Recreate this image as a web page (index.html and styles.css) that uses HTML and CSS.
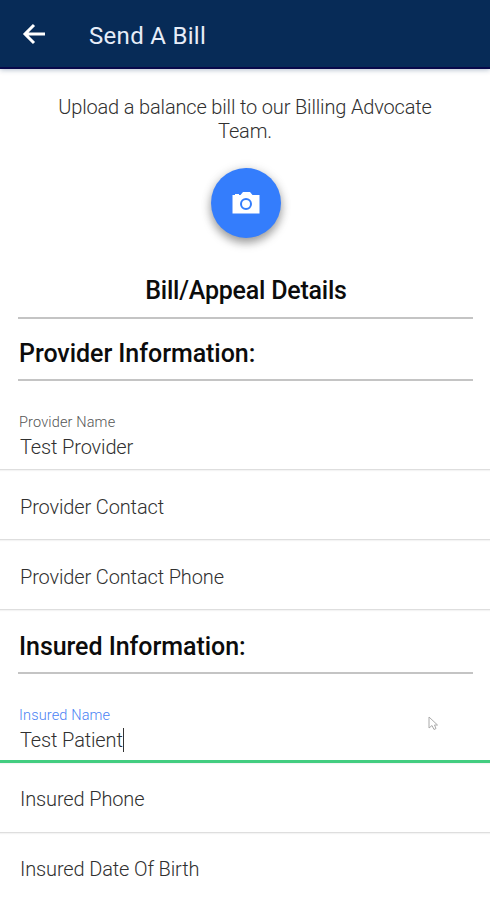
FILE: index.html
```html
<!DOCTYPE html>
<html lang="en">
<head>
  <meta charset="UTF-8">
  <title>Send A Bill</title>
  <link rel="stylesheet" href="styles.css">
</head>
<body>
  <header class="toolbar">
    <svg class="back" viewBox="0 0 24 24" width="24" height="24">
      <path d="M12 3 L3 12 L12 21 M3 12 H23" fill="none" stroke="#fff" stroke-width="3"/>
    </svg>
    <h1>Send A Bill</h1>
  </header>

  <main>
    <p class="intro">Upload a balance bill to our Billing Advocate<br>Team.</p>

    <div class="upload">
      <button class="fab" aria-label="Take a photo">
        <svg viewBox="0 0 28 22" width="28" height="22">
          <path d="M1 3 H3 V2 H7 V3 H8.500 L11 0 H18 L20.500 3 H27.500 V21.500 H0.500 V3 Z" fill="#fff"/>
          <circle cx="14" cy="12" r="5" fill="none" stroke="#347dfc" stroke-width="2"/>
        </svg>
      </button>
    </div>

    <h2 class="heading details">Bill/Appeal Details</h2>

    <h2 class="heading provider">Provider Information:</h2>
    <div class="field filled">
      <span class="label">Provider Name</span>
      <span class="value">Test Provider</span>
    </div>
    <div class="field">Provider Contact</div>
    <div class="field">Provider Contact Phone</div>

    <h2 class="heading insured">Insured Information:</h2>
    <div class="field filled focused">
      <span class="label">Insured Name</span>
      <span class="value">Test Patient<i class="caret"></i></span>
      <svg class="pointer" viewBox="0 0 10 15" width="10" height="15">
        <path d="M1 1 V12 L4 9.500 L6 13.500 L8 12.500 L6.500 9 H9.500 Z" fill="#fff" stroke="#aaa"/>
      </svg>
    </div>
    <div class="field compact">Insured Phone</div>
    <div class="field compact last">Insured Date Of Birth</div>
  </main>
</body>
</html>
```

FILE: styles.css
```css
* {
  box-sizing: border-box;
}
body {
  margin: 0;
  height: 900px;
  overflow: hidden;
  background: #fff;
  color: #303030;
  font-family: Roboto, sans-serif;
  font-size: 20px;
}
.toolbar {
  height: 69px;
  padding: 2px 0 0 22px;
  display: flex;
  align-items: center;
  background: #072b57;
  border-bottom: 2px solid #08094a;
  box-shadow: 0 1px 5px rgba(7, 43, 87, 0.3);
}
.back {
  margin-bottom: 2px;
}
.toolbar h1 {
  margin: 2px 0 0 43px;
  color: #e6edf8;
  font-size: 24px;
  font-weight: 400;
  letter-spacing: 0.3px;
}
.intro {
  margin: 26px 0 0;
  line-height: 24px;
  text-align: center;
  font-weight: 300;
  letter-spacing: -0.16px;
}
.upload {
  display: flex;
  justify-content: center;
  padding: 25px 0 0 2px;
}
.fab {
  width: 70px;
  height: 70px;
  padding: 0;
  display: flex;
  align-items: center;
  justify-content: center;
  border: none;
  border-radius: 50%;
  background: #347dfc;
  box-shadow: 0 5px 10px rgba(0, 0, 0, 0.35), 0 1px 12px rgba(0, 0, 0, 0.12);
}
.heading {
  height: 62px;
  margin: 0 17px 0 18px;
  padding: 0 0 0 1px;
  display: flex;
  align-items: center;
  border-bottom: 2px solid #c4c4c4;
  color: #0c0c0c;
  font-size: 25px;
  font-weight: 500;
  letter-spacing: -0.05px;
}
.details {
  height: 81px;
  padding: 26px 0 0 1px;
  justify-content: center;
  letter-spacing: -0.22px;
}
.provider {
  padding-top: 9px;
}
.insured {
  height: 64px;
  padding-top: 10px;
}
.field {
  height: 70px;
  padding: 5px 20px 0;
  display: flex;
  align-items: center;
  border-bottom: 1px solid #dedede;
  box-shadow: 0 1px 1px #f4f4f4;
  font-weight: 300;
  letter-spacing: -0.14px;
}
.filled {
  position: relative;
  height: 89px;
  padding-top: 32px;
  flex-direction: column;
  align-items: flex-start;
}
.label {
  margin-left: -1px;
  line-height: 19px;
  font-size: 14.5px;
  letter-spacing: 0.15px;
  color: #555;
}
.value {
  display: flex;
  align-items: center;
  line-height: 30px;
}
.focused {
  border-bottom: 3px solid #43cd80;
}
.focused .label {
  color: #4a82f4;
}
.caret {
  width: 1px;
  height: 24px;
  background: #333;
}
.pointer {
  position: absolute;
  left: 428px;
  top: 42px;
}
.compact {
  padding-top: 3px;
}
.last {
  padding-top: 2px;
  border: none;
  box-shadow: none;
}
```
